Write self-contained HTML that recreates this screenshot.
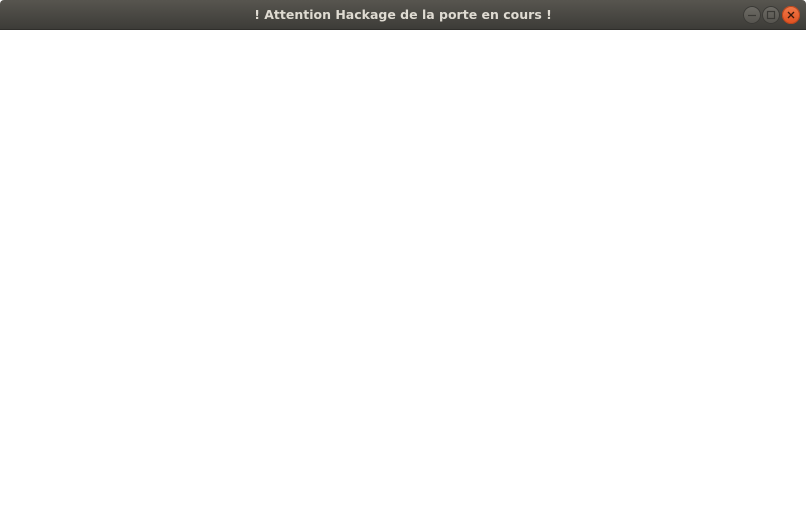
<!DOCTYPE html>
<html><head><meta charset="utf-8"><style>
html,body{margin:0;padding:0;width:806px;height:530px;background:#fff;overflow:hidden}
.bar{position:absolute;left:0;top:0;width:806px;height:30px;background:linear-gradient(#57554f,#3d3c38);border-radius:4px 4px 0 0;border-bottom:1px solid #2f2e2b;box-sizing:border-box}
.t{position:absolute;left:0;right:0;top:0;text-align:center;color:#dfdbd2;font:bold 12.5px "DejaVu Sans","Liberation Sans",sans-serif;line-height:30px}
.b{position:absolute;top:6px;width:18px;height:18px;border-radius:50%;background:linear-gradient(#6e6c66,#55534e);box-shadow:inset 0 0 0 1px #3a3935}
.b svg{position:absolute;left:0;top:0}
.c{background:linear-gradient(#f27a4a,#e0501f);box-shadow:inset 0 0 0 1px #b8461e}
</style></head><body>
<div class="bar"><div class="t">! Attention Hackage de la porte en cours !</div>
<div class="b" style="left:743px"><svg width="18" height="18"><line x1="5" y1="9.5" x2="13" y2="9.5" stroke="#3a3935" stroke-width="1.2"/></svg></div>
<div class="b" style="left:762px"><svg width="18" height="18"><rect x="5.5" y="5.5" width="7" height="7" fill="none" stroke="#3a3935" stroke-width="1.2"/></svg></div>
<div class="b c" style="left:782px"><svg width="18" height="18"><path d="M6 6L12 12M12 6L6 12" stroke="#3a1a0c" stroke-width="1.3"/></svg></div>
</div>
</body></html>
